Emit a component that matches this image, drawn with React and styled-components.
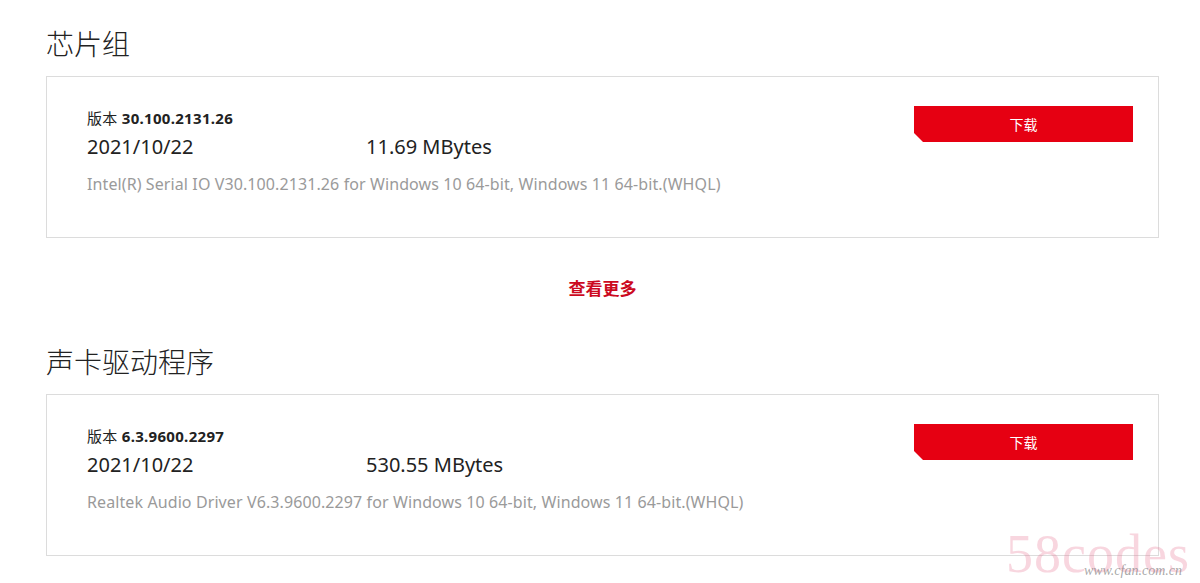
import React from 'react';
import styled, { createGlobalStyle } from 'styled-components';

const GlobalStyle = createGlobalStyle`
  html, body {
    margin: 0;
    padding: 0;
    background: #fff;
  }
  body {
    font-family: "Noto Sans", "Noto Sans CJK SC", sans-serif;
    color: #222;
  }
`;

const Page = styled.div`
  position: relative;
  width: 1200px;
  height: 583px;
  overflow: hidden;
  padding: 23px 41px 0 46px;
  box-sizing: border-box;
`;

const Heading = styled.h2`
  margin: 0 0 13px 0;
  font-family: "Noto Sans CJK SC", sans-serif;
  font-size: 28px;
  font-weight: 300;
  line-height: 40px;
  color: #222;
`;

const Card = styled.div`
  height: 162px;
  box-sizing: border-box;
  border: 1px solid #dcdcdc;
  padding: 30px 25px 0 40px;
  display: flex;
  justify-content: space-between;
  align-items: flex-start;
`;

const Info = styled.div`
  display: flex;
  flex-direction: column;
`;

const Version = styled.div`
  font-family: "Noto Sans", "Noto Sans CJK SC", sans-serif;
  font-size: 15px;
  line-height: 22px;
  letter-spacing: 0.3px;
  color: #222;

  b {
    font-weight: 700;
  }
`;

const Meta = styled.div`
  display: flex;
  font-size: 20px;
  line-height: 30px;
  margin-top: 3px;
  color: #222;
`;

const Date = styled.span`
  width: 279px;
`;

const Desc = styled.div`
  margin-top: 10px;
  font-size: 16px;
  line-height: 24px;
  letter-spacing: 0.1px;
  color: #9a9a9a;
`;

const DownloadButton = styled.button`
  width: 219px;
  height: 36px;
  margin-top: -1px;
  border: 0;
  background: #e60012;
  color: #fff;
  font-family: "Noto Sans CJK SC", sans-serif;
  font-size: 14px;
  cursor: pointer;
  clip-path: polygon(0 0, 100% 0, 100% 100%, 9px 100%, 0 calc(100% - 9px));
`;

const MoreLink = styled.a`
  display: block;
  margin: 38px 0 41px;
  text-align: center;
  font-family: "Noto Sans CJK SC", sans-serif;
  font-size: 17px;
  font-weight: 700;
  line-height: 24px;
  color: #cc0a1f;
  cursor: pointer;
`;

const Watermark = styled.div`
  position: absolute;
  right: 10px;
  bottom: 2px;
  pointer-events: none;
`;

const WatermarkBig = styled.div`
  font-family: "Liberation Serif", serif;
  font-size: 54px;
  line-height: 54px;
  letter-spacing: 1px;
  color: rgba(232, 120, 150, 0.3);
`;

const WatermarkSmall = styled.div`
  position: absolute;
  right: 8px;
  bottom: 2px;
  font-family: "Liberation Serif", serif;
  font-style: italic;
  font-size: 14px;
  color: rgba(120, 120, 120, 0.65);
`;

const drivers = [
  {
    title: '芯片组',
    version: '30.100.2131.26',
    date: '2021/10/22',
    size: '11.69 MBytes',
    desc: 'Intel(R) Serial IO V30.100.2131.26 for Windows 10 64-bit, Windows 11 64-bit.(WHQL)',
  },
  {
    title: '声卡驱动程序',
    version: '6.3.9600.2297',
    date: '2021/10/22',
    size: '530.55 MBytes',
    desc: 'Realtek Audio Driver V6.3.9600.2297 for Windows 10 64-bit, Windows 11 64-bit.(WHQL)',
  },
];

const DriverCard = ({ item }) => (
  <Card>
    <Info>
      <Version>
        版本 <b>{item.version}</b>
      </Version>
      <Meta>
        <Date>{item.date}</Date>
        <span>{item.size}</span>
      </Meta>
      <Desc>{item.desc}</Desc>
    </Info>
    <DownloadButton>下载</DownloadButton>
  </Card>
);

export default function App() {
  return (
    <>
      <GlobalStyle />
      <Page>
        <Heading>{drivers[0].title}</Heading>
        <DriverCard item={drivers[0]} />
        <MoreLink>查看更多</MoreLink>
        <Heading>{drivers[1].title}</Heading>
        <DriverCard item={drivers[1]} />
        <Watermark>
          <WatermarkBig>58codes</WatermarkBig>
          <WatermarkSmall>www.cfan.com.cn</WatermarkSmall>
        </Watermark>
      </Page>
    </>
  );
}
